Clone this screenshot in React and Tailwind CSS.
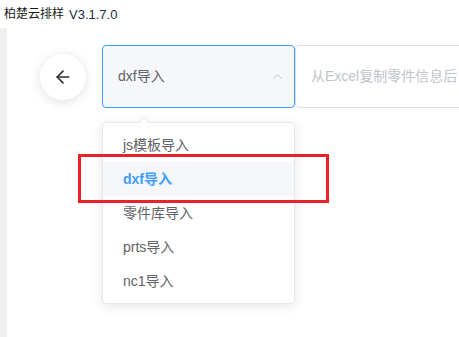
import { ArrowLeft, ChevronUp } from "lucide-react";

const options = ["js模板导入", "dxf导入", "零件库导入", "prts导入", "nc1导入"];

export default function App() {
  const selected = "dxf导入";
  return (
    <div
      className="relative w-[459px] h-[337px] overflow-hidden bg-white"
      style={{ fontFamily: '"Liberation Sans", "Noto Sans CJK SC", sans-serif' }}
    >
      {/* Title bar */}
      <div className="h-[28px] flex items-center pl-[4px] leading-none text-[#1a1a1a]">
        <span className="text-[12px]">柏楚云排样</span>
        <span className="ml-[5px] text-[13px] text-[#1f2a44]">V3.1.7.0</span>
      </div>

      <div className="flex h-[309px]">
        <div className="w-[7px] bg-[#efefef] shrink-0" />

        <div className="flex-1 overflow-hidden">
          <div className="flex items-center mt-[17px] pl-[33px]">
            {/* Back button */}
            <button className="w-[46px] h-[46px] shrink-0 rounded-full bg-white shadow-[0_2px_12px_rgba(0,0,0,0.12)] flex items-center justify-center">
              <ArrowLeft className="w-[20px] h-[20px] text-[#303133]" strokeWidth={2} />
            </button>

            {/* Select */}
            <div className="relative ml-[16px] shrink-0">
              <div className="w-[193px] h-[63px] rounded-[4px] border border-[#409eff] bg-[#f5f7fa] flex items-center justify-between pl-[15px] pr-[9px]">
                <span className="text-[14px] text-[#606266]">{selected}</span>
                <ChevronUp className="w-[15px] h-[15px] text-[#c0c4cc]" strokeWidth={1.5} />
              </div>

              {/* Dropdown */}
              <div className="absolute left-0 top-[77px] w-[193px] rounded-[4px] border border-[#e4e7ed] bg-white shadow-[0_2px_12px_rgba(0,0,0,0.1)] py-[5px] z-10">
                <div className="absolute -top-[6px] left-[35px] w-0 h-0 border-x-[6px] border-x-transparent border-b-[6px] border-b-[#e4e7ed]" />
                <div className="absolute -top-[5px] left-[36px] w-0 h-0 border-x-[5px] border-x-transparent border-b-[5px] border-b-white" />
                {options.map((opt) => (
                  <div
                    key={opt}
                    className={
                      opt === selected
                        ? "h-[34px] flex items-center px-[20px] text-[14px] bg-[#f5f7fa] text-[#409eff] font-bold"
                        : "h-[34px] flex items-center px-[20px] text-[14px] text-[#606266]"
                    }
                  >
                    {opt}
                  </div>
                ))}
              </div>
            </div>

            {/* Textarea */}
            <div className="w-[300px] h-[63px] shrink-0 border border-[#dcdfe6] rounded-[4px] flex items-center pl-[15px] text-[14px] text-[#c0c4cc] whitespace-nowrap">
              从Excel复制零件信息后，粘贴到此处
            </div>
          </div>
        </div>
      </div>

      {/* Highlight marker */}
      <div className="absolute left-[78px] top-[154px] w-[251px] h-[49px] border-[3px] border-[#e8212b] z-20" />
    </div>
  );
}
